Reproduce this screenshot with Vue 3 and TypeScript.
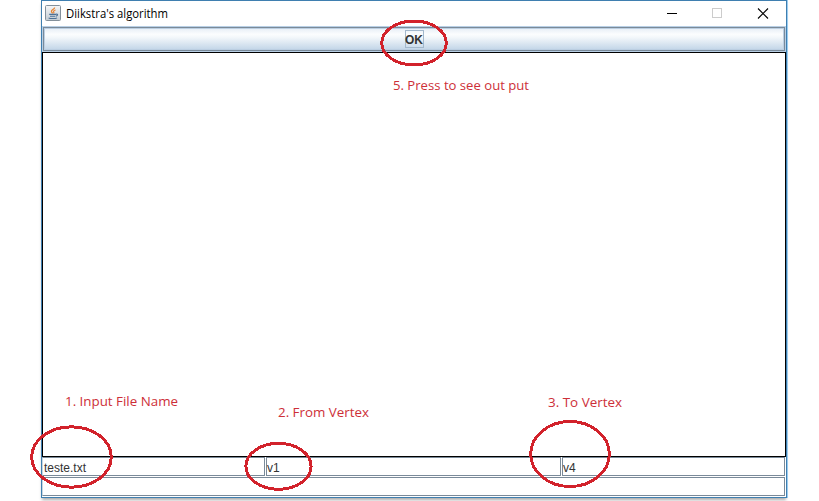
<script setup lang="ts">
interface Ring { cx: number; cy: number; rx: number; ry: number }
interface Note { text: string; x: number; y: number; width: number }

const rings: Ring[] = [
  { cx: 414, cy: 43, rx: 32.3, ry: 22 },
  { cx: 71.5, cy: 457, rx: 39.8, ry: 30.2 },
  { cx: 278.5, cy: 466.3, rx: 32.6, ry: 23 },
  { cx: 570, cy: 454, rx: 39.3, ry: 32.5 },
]
const notes: Note[] = [
  { text: '1. Input File Name', x: 65, y: 406, width: 113 },
  { text: '2. From Vertex', x: 278, y: 417, width: 91 },
  { text: '3. To Vertex', x: 548, y: 407, width: 74 },
  { text: '5. Press to see out put', x: 393, y: 90, width: 136 },
]
const fields: string[] = ['teste.txt', 'v1', 'v4']
</script>

<template>
  <main class="page">
    <section class="window">
      <header class="titlebar">
        <svg class="logo" width="16" height="16" viewBox="0 0 16 16">
          <defs>
            <linearGradient id="tile" x1="0" y1="0" x2="0" y2="1">
              <stop offset="0" stop-color="#f6f7f8" />
              <stop offset="1" stop-color="#c3cbd2" />
            </linearGradient>
          </defs>
          <rect x=".5" y=".5" width="15" height="15" rx="1" fill="url(#tile)" stroke="#83909b" />
          <path d="M9.6 2.5C9.8 4.4 6 4.8 6.4 6.5C6.6 7.4 7.6 7.7 7.5 8.5M10.6 5C9 5.5 8.2 6.2 8.7 7C9.1 7.6 9 8 8.5 8.4" fill="none" stroke="#e8812c" stroke-width="1.2" />
          <path d="M4.2 9.4H11M5 11.2H10.3M11 9.2C13.4 8.8 12.8 10.8 10.9 11.2M3.6 12.8C4.8 13.8 10.8 13.8 12 12.8" fill="none" stroke="#4e7296" stroke-width="1.1" />
        </svg>
        <svg class="title" width="110" height="25"><text x="0" y="17" textLength="102" lengthAdjust="spacingAndGlyphs">Diikstra's algorithm</text></svg>
        <svg class="controls" width="120" height="25" viewBox="0 0 120 25">
          <path d="M1 12.5H11" stroke="#000" />
          <rect x="46.5" y="7.5" width="9" height="9" fill="none" stroke="#ccc" />
          <path d="M92 7.5L102 17.5M102 7.5L92 17.5" stroke="#000" stroke-width="1.1" />
        </svg>
      </header>
      <button class="ok"><span class="focus">OK</span></button>
      <div class="canvas"></div>
      <div class="fields">
        <div v-for="field in fields" :key="field" class="field">{{ field }}</div>
      </div>
      <div class="field result"></div>
    </section>
    <svg class="notes" width="819" height="501" viewBox="0 0 819 501">
      <ellipse v-for="(r, i) in rings" :key="i" :cx="r.cx" :cy="r.cy" :rx="r.rx" :ry="r.ry" />
      <text v-for="n in notes" :key="n.text" :x="n.x" :y="n.y" :textLength="n.width" lengthAdjust="spacingAndGlyphs">{{ n.text }}</text>
    </svg>
  </main>
</template>

<style>
body { margin: 0; background: #fff; }
</style>

<style scoped>
* { box-sizing: border-box; }
.page { position: relative; width: 819px; height: 501px; padding-left: 41px; overflow: hidden; background: #fff; }
.window {
  display: flex; flex-direction: column; width: 746px; height: 498px;
  border: 1px solid #3f7fb0; background: #fff;
  box-shadow: 1px 0 #9dcdf0, 0 3px 3px -1px #aaa;
}
.titlebar { display: flex; flex: 0 0 25px; padding-left: 3px; }
.logo { margin-top: 4px; }
.title { margin-left: 5px; }
.title text { font: 12px "Open Sans", "Noto Sans", sans-serif; fill: #000; }
.controls { margin-left: auto; }
.ok {
  flex: 0 0 26px; display: flex; align-items: center; justify-content: center;
  margin: 0; padding: 0; border: 1px solid #b8cfe5; border-radius: 0;
  background: linear-gradient(#e2ebf4, #fbfdfe 30%, #f4f8fb 42%, #bdd2e6);
  box-shadow: inset 0 0 0 1px #7a8a99, inset 0 0 0 2px #bccfe2;
}
.focus {
  display: flex; justify-content: center;
  width: 19px; height: 18px; border: 1px solid #a3b8cc;
  color: #333; font: bold 12px/19px "Liberation Sans", Arial, sans-serif;
}
.canvas { flex: 0 0 405px; border: 1px solid #000; }
.fields { display: grid; grid-template-columns: 223px 295px 223px; column-gap: 1px; height: 19px; margin-bottom: 1px; }
.field {
  height: 19px; border: 1px solid #7a8a99; color: #333;
  font: 12px/20px "Liberation Sans", Arial, sans-serif; white-space: nowrap;
}
.field:first-child { padding-left: 1px; }
.field:first-child, .result { border-left-color: #c9d6df; }
.result { width: 743px; }
.notes { position: absolute; left: 0; top: 0; pointer-events: none; }
.notes ellipse { fill: none; stroke: #d2222b; stroke-width: 3; shape-rendering: crispEdges; }
.notes text { fill: #cd2f38; font: 13px "Open Sans", "Noto Sans", sans-serif; }
</style>
